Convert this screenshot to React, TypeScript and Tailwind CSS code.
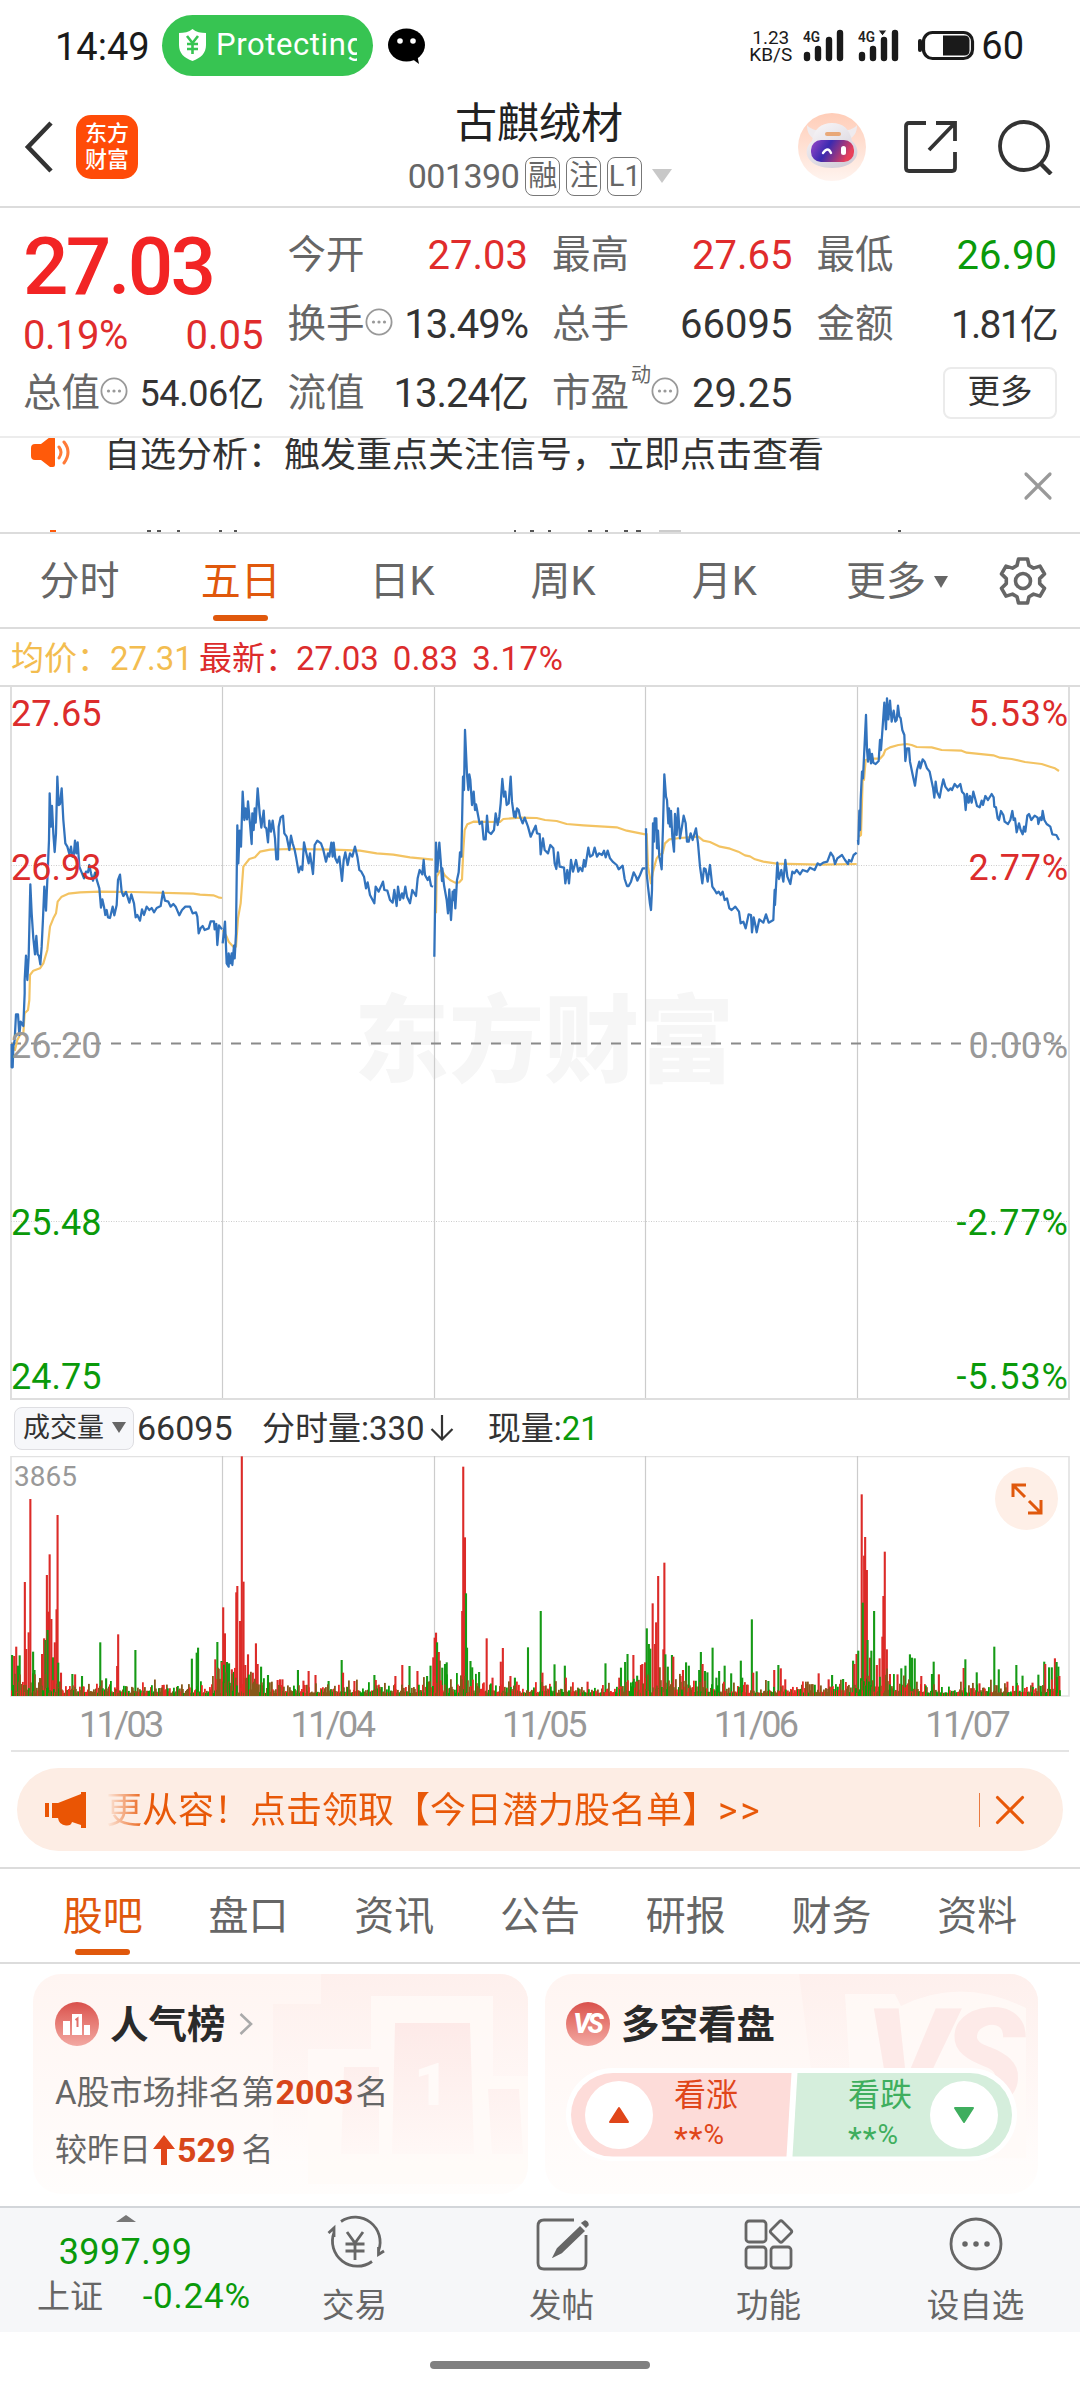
import { X } from 'lucide-react';

const DAYS = [
    {
        dx: 0,
        price: '35,1092 35,1162 38,1162 40,1100 44,1080 48,1003 54,1003 58,1065 62,1025 70,1038 74,940 74,900 78,827 82,900 86,830 91,613 95,700 100,775 105,823 109,768 113,823 117,828 121,853 125,800 129,715 133,620 138,692 142,600 147,480 149,340 153,440 156,378 160,460 164,516 168,460 172,290 176,375 180,372 185,325 190,420 196,490 202,500 208,522 213,500 217,530 221,528 225,482 229,520 233,487 238,560 244,575 252,595 258,575 264,577 268,555 273,580 279,602 285,578 291,602 298,625 303,683 307,658 312,680 316,705 320,690 324,712 330,714 338,680 343,706 350,675 354,600 360,584 365,635 370,648 378,636 388,668 394,643 402,670 407,712 412,705 420,722 426,688 432,705 440,680 448,690 455,684 462,697 470,684 482,678 489,635 495,662 505,665 512,680 520,672 527,680 538,706 546,690 556,680 570,680 578,700 588,697 592,710 596,760 602,744 608,738 614,750 626,745 632,724 642,724 644,748 649,732 652,795 657,736 666,748',
        avg: '35,1092 45,1110 52,1080 60,1065 70,1060 74,1000 84,990 88,960 90,885 100,872 120,865 130,850 142,810 150,740 160,715 168,700 173,665 185,650 205,641 240,637 300,635 400,636 580,641 600,644 640,646 655,652 666,654',
    },
    {
        dx: 0,
        price: '668,790 675,725 680,850 686,860 686,820 690,850 695,820 697,855 702,797 704,835 708,760 712,436 715,550 719,452 723,500 728,335 733,420 736,385 741,418 744,364 749,420 755,492 757,400 761,450 764,385 767,428 773,325 779,400 784,443 791,392 794,440 799,445 804,487 808,422 813,455 818,422 825,475 829,538 834,538 836,440 842,412 849,407 853,460 860,470 868,510 873,467 878,490 884,510 888,530 896,577 902,560 907,570 912,487 918,515 926,550 930,520 939,582 944,495 952,482 963,490 970,510 978,545 984,520 988,530 994,488 998,530 1001,488 1006,535 1012,548 1018,530 1026,603 1031,540 1036,517 1043,555 1050,520 1057,530 1065,500 1072,530 1078,570 1084,575 1092,590 1098,625 1103,607 1110,645 1123,670 1127,620 1136,635 1149,605 1153,630 1162,632 1170,660 1178,668 1183,630 1190,678 1194,620 1200,660 1206,640 1210,655 1216,620 1221,650 1230,670 1237,630 1248,648 1253,595 1259,570 1267,583 1271,540 1275,585 1283,600 1288,590 1293,617 1299,620',
        avg: '668,750 680,770 686,785 700,800 708,800 714,715 722,670 730,560 748,537 765,532 780,515 810,509 870,507 1000,509 1080,512 1130,520 1180,524 1230,532 1299,539',
    },
    {
        dx: 1260,
        price: '43,830 48,488 52,575 58,488 62,540 66,603 67,565 72,615 80,660 84,700 88,628 93,720 98,635 101,660 103,630 106,685 111,600 116,577 120,517 124,530 129,290 132,330 135,150 141,283 145,330 148,283 151,300 156,375 161,335 165,390 168,373 175,410 179,432 186,425 191,478 197,478 201,407 205,455 213,462 222,450 227,400 233,435 238,410 242,370 247,297 252,350 256,335 260,375 266,370 272,290 276,365 282,410 285,395 287,412 291,385 296,390 300,410 308,430 314,413 324,440 332,470 340,452 347,437 351,460 359,462 362,523 369,475 374,510 384,520 391,495 400,505 404,550 409,567 414,517 419,560 432,563 436,610 442,570 447,610 453,540 459,575 468,540 475,575 480,563 487,573 492,540 496,560 505,503 510,530 518,525 524,503 531,530 537,520 546,525 552,512 557,532 563,512 570,535 578,545 590,555 596,568 608,557 614,597 621,618 626,618 633,605 641,577 648,590 652,602 660,585 668,565 676,565',
        avg: '48,700 50,590 60,572 66,570 75,587 90,600 105,608 118,607 126,598 130,510 134,450 142,433 160,425 240,426 250,417 300,413 350,414 375,420 410,423 440,432 490,436 590,442 620,452 676,463',
    },
    {
        dx: 1260,
        price: '678,445 680,580 684,620 690,672 693,690 696,630 699,430 702,485 704,415 709,415 711,505 714,452 718,530 722,550 725,568 729,440 733,283 738,350 741,360 745,430 747,385 750,440 753,393 757,470 762,515 765,402 770,465 774,385 780,475 786,440 791,407 797,430 801,485 806,485 812,460 818,480 828,445 834,490 840,560 847,610 852,565 857,568 863,605 870,555 877,620 884,630 890,640 896,635 902,645 908,635 914,660 921,655 928,685 935,690 946,680 957,695 962,730 970,725 977,745 986,703 993,705 996,757 1001,712 1006,735 1010,757 1018,718 1030,728 1038,703 1046,728 1060,720 1064,630 1065,675 1072,548 1077,597 1084,570 1090,605 1096,540 1102,590 1111,612 1117,575 1123,580 1130,570 1140,583 1148,570 1162,575 1170,563 1184,570 1193,550 1200,555 1210,548 1222,545 1232,518 1240,530 1245,552 1252,535 1266,525 1275,540 1284,552 1287,540 1294,545 1301,525 1310,518',
        avg: '680,460 684,560 693,610 698,580 703,560 710,535 718,525 728,520 735,490 748,478 780,474 835,470 850,482 870,486 900,500 930,506 955,515 975,526 990,529 1005,538 1030,545 1070,551 1200,554 1310,552',
    },
    {
        dx: 2340,
        price: '234,480 235,492 238,392 240,450 242,360 246,275 249,295 253,210 258,105 261,210 264,245 268,208 273,250 276,222 280,248 287,252 296,243 300,180 303,210 308,140 313,68 318,148 321,55 325,118 330,62 335,125 341,92 346,125 350,120 354,77 358,110 362,115 367,150 373,165 376,243 381,205 387,205 390,245 397,280 405,317 411,270 418,245 421,265 428,238 434,245 441,265 449,275 453,295 459,323 463,353 467,305 471,335 479,353 484,325 490,298 496,320 505,332 512,325 516,330 524,312 532,322 541,312 546,335 553,343 557,390 561,342 566,368 570,348 575,368 580,335 586,358 591,378 599,382 605,362 609,375 616,348 624,360 635,342 641,352 643,380 648,382 653,415 657,420 663,393 670,405 674,425 684,432 691,420 697,393 701,420 705,415 710,457 717,430 722,450 728,463 732,440 736,455 742,407 747,402 754,420 764,407 773,413 775,432 781,412 785,420 788,393 793,420 800,432 811,440 817,463 829,465 837,480',
        avg: '236,470 243,465 248,300 252,300 257,240 270,236 300,236 310,225 316,210 330,202 355,195 380,192 395,195 410,201 455,202 485,210 545,212 560,218 640,226 660,233 695,237 735,246 785,252 810,260 825,265 837,273',
    },
];

// x, y, colour of the taller volume bars (y grows downwards, 948 is the base line)
const SPIKES =
    '35,825,g 41,828,r 47,800,r 52,857,g 57,826,g 72,606,r 76,807,r 83,757,r 88,357,r 96,815,g 100,870,g 122,822,r 128,775,r 132,780,g 136,585,r 140,695,r 144,523,r 138,750,g 149,717,r 154,832,g 159,787,r 164,688,r 167,405,r 169,848,g 177,878,r 210,882,g 218,883,r 238,888,g 291,787,g 308,895,g 340,858,r 343,763,r 393,810,g 472,915,r 557,836,g 571,818,g 575,803,g 625,838,r 631,786,g 648,682,r 653,760,r 643,843,g 659,846,g 665,850,g 673,868,r 686,637,r 689,618,r 697,723,r 702,229,r 707,605,r 712,855,r 720,823,r 734,878,r 743,790,r 748,852,r 758,860,g 778,885,g 806,900,r 813,898,r 820,898,r 865,870,g 881,902,r 896,873,r 916,885,r 954,903,g 992,840,g 996,878,r 1029,903,r 1087,885,g 1091,900,r 1148,888,r 1168,855,r 1189,858,g 1212,873,r 1240,888,g 1250,857,g 1258,832,r 1262,773,r 1266,758,r 1269,787,g 1274,816,r 1284,863,g 1292,852,g 1297,847,g 1342,693,r 1345,260,r 1350,472,r 1353,640,g 1356,803,g 1366,843,g 1371,862,g 1391,876,g 1413,775,r 1430,893,r 1454,845,r 1460,804,r 1482,888,r 1495,893,g 1533,802,g 1570,693,g 1575,878,r 1610,853,g 1640,857,g 1643,893,r 1706,905,r 1758,850,g 1798,893,r 1803,863,g 1815,846,g 1822,822,g 1839,825,r 1850,887,g 1861,855,r 1865,852,r 1873,847,r 1878,745,g 1884,792,g 1888,806,g 1895,670,r 1902,792,r 1905,727,r 1911,588,r 1926,808,r 1929,548,r 1932,823,g 1939,860,g 1951,825,g 1955,830,r 1976,888,r 1983,870,r 1992,847,g 2000,857,g 2030,870,g 2035,816,g 2040,852,r 2047,873,g 2054,877,g 2069,803,g 2080,893,g 2088,873,g 2104,857,g 2123,880,g 2151,842,g 2155,893,g 2183,718,g 2187,878,r 2197,874,g 2231,903,g 2248,870,r 2260,855,g 2267,865,r 2280,898,r 2344,912,r 2377,880,r 2406,898,r 2416,885,g 2448,897,g 2477,842,g 2481,852,r 2487,822,r 2492,812,g 2502,343,r 2509,527,r 2512,471,r 2505,668,g 2517,570,r 2519,780,g 2526,833,r 2530,812,g 2538,693,g 2546,855,r 2554,835,r 2562,770,r 2565,648,r 2569,515,r 2575,808,r 2584,882,r 2606,883,r 2617,865,g 2629,857,g 2642,823,g 2648,833,g 2656,835,g 2675,888,r 2706,882,g 2711,845,g 2726,883,r 2798,864,r 2803,838,g 2836,877,g 2844,910,r 2887,800,g 2900,868,g 2925,905,r 2951,855,g 2969,887,g 2998,908,r 3015,884,g 3032,845,g 3035,852,r 3046,862,g 3054,862,g 3063,835,r 3068,846,g 3073,860,g 3076,888,r'
        .split(' ')
        .map((s) => s.split(','))
        .map(([x, y, c]) => ({ x: Number(x) / 2.9037 - 11, h: (948 - Number(y)) / 3, red: c === 'r' }));

function smallBars() {
    const bars: { x: number; h: number; color: string }[] = [];
    const colors = ['#e82a25', '#0a9c0a', '#86581a', '#86581a'];
    let seed = 41;
    const rand = () => {
        seed = (seed * 1103515245 + 12345) % 2147483648;
        return seed / 2147483648;
    };
    for (let x = 0; x < 1049; x += 1) {
        const t = (x % 211.6) / 211.6;
        const swell = t < 0.28 ? 24 - t * 50 : t > 0.88 ? 9 + (t - 0.88) * 120 : 9;
        bars.push({ x, h: 3 + rand() * rand() * swell * 1.6, color: colors[Math.floor(rand() * 4)] });
    }
    return bars;
}

const SMALL_BARS = smallBars();

const PERIODS = ['分时', '五日', '日K', '周K', '月K'];
const SECTIONS = ['股吧', '盘口', '资讯', '公告', '研报', '财务', '资料'];

function Dots() {
    return (
        <svg width="28" height="28" viewBox="0 0 28 28" className="mb-[3px] shrink-0">
            <circle cx="14" cy="14" r="12.6" fill="none" stroke="#999" strokeWidth="1.8" />
            <circle cx="8.5" cy="14" r="1.6" fill="#999" />
            <circle cx="14" cy="14" r="1.6" fill="#999" />
            <circle cx="19.5" cy="14" r="1.6" fill="#999" />
        </svg>
    );
}

function Signal({ arrow }: { arrow?: boolean }) {
    return (
        <svg width="42" height="34" viewBox="0 0 42 34">
            <text x="0" y="13" fontSize="15" fontWeight="600" fill="#222" textLength="17" lengthAdjust="spacingAndGlyphs">4G</text>
            <g stroke="#1a1a1a" strokeWidth="6.4" strokeLinecap="round">
                <path d="M4 26v3M15 20v9M26 11v18M37 4v25" />
            </g>
            {arrow && <path d="M20 1h9l-4.500 6z" fill="#222" stroke="#fff" strokeWidth="1" />}
        </svg>
    );
}

function StatusBar() {
    return (
        <div className="flex h-[90px] items-center pl-[55px] pr-[56px] text-[#1a1a1a]">
            <span className="w-[107px] pt-[3px] text-[38px] leading-none">14:49</span>
            <div className="flex h-[61px] w-[211px] items-center rounded-full bg-[#37c452] pl-4">
                <svg width="29" height="32" viewBox="0 0 29 32">
                    <path d="M14.500 0C18 3 23 4 28 4v12c0 8-5 13-13.500 16C6 29 1 24 1 16V4c5 0 10-1 13.500-4z" fill="#fff" />
                    <path d="M9 7l5.500 7L20 7M14.500 14v11M9 15h11M9 20h11" stroke="#37c452" strokeWidth="2.600" fill="none" />
                </svg>
                <span className="ml-[9px] w-[141px] overflow-hidden text-[31px] tracking-[0.6px] leading-[40px] text-white">Protecting</span>
            </div>
            <svg className="ml-[14px] mt-[3px]" width="40" height="38" viewBox="0 0 40 38">
                <ellipse cx="19.500" cy="17" rx="18.500" ry="16.500" />
                <path d="M24 30l8 6-2-10z" />
                <circle cx="13" cy="13" r="2.800" fill="#fff" />
                <circle cx="26" cy="13" r="2.800" fill="#fff" />
            </svg>
            <div className="ml-auto flex items-center pt-[2px]">
                <div className="w-[55px] text-center text-[19px] leading-[17px]">
                    1.23
                    <br />
                    KB/S
                </div>
                <div className="w-[5px]" />
                <Signal />
                <div className="w-[13px]" />
                <Signal arrow />
                <svg className="ml-[17px]" width="58" height="32" viewBox="0 0 58 32">
                    <path d="M3 11v9" stroke="#1a1a1a" strokeWidth="4" strokeLinecap="round" />
                    <rect x="6.500" y="2.500" width="49" height="26" rx="9" fill="none" stroke="#1a1a1a" strokeWidth="3.200" />
                    <path d="M26 5.500h21.500q5 0 5 5v10q0 5-5 5H26z" fill="#1a1a1a" />
                </svg>
                <span className="ml-[6px] text-[38px] leading-none">60</span>
            </div>
        </div>
    );
}

function Robot() {
    return (
        <svg width="70" height="70" viewBox="0 0 70 70">
            <defs>
                <linearGradient id="halo" x1="0" y1="0" x2="0" y2="1">
                    <stop offset="0" stopColor="#ffcdb8" />
                    <stop offset="1" stopColor="#fff4ef" />
                </linearGradient>
                <linearGradient id="visor" x1="0" y1="0" x2="1" y2="0.3">
                    <stop offset="0" stopColor="#9a48c8" />
                    <stop offset="0.45" stopColor="#3a2ab0" />
                    <stop offset="1" stopColor="#e8405a" />
                </linearGradient>
                <linearGradient id="shell" x1="0" y1="0" x2="0.6" y2="1">
                    <stop offset="0" stopColor="#fbf9fa" />
                    <stop offset="1" stopColor="#d4d0da" />
                </linearGradient>
            </defs>
            <circle cx="35" cy="35" r="34" fill="url(#halo)" />
            <path d="M10 13c0 8 3 11 7 14l8-9c-6 1-12-1-15-5zM60 13c0 8-3 11-7 14l-8-9c6 1 12-1 15-5z" fill="#efebee" />
            <path d="M35 11c11 0 18 6 20 18 6 5 7 13 3 18-4 6-13 9-23 9s-19-3-23-9c-4-5-3-13 3-18 2-12 9-18 20-18z" fill="url(#shell)" />
            <rect x="28" y="20" width="16" height="4" rx="2" fill="#e8a878" />
            <rect x="14" y="28" width="43" height="22" rx="10" fill="url(#visor)" />
            <path d="M26 41q5-7 8 0" stroke="#fff" strokeWidth="2.400" fill="none" strokeLinecap="round" />
            <rect x="44" y="34" width="5" height="9" rx="2.500" fill="#fff" />
        </svg>
    );
}

function Header() {
    return (
        <div className="flex h-[118px] items-center justify-between border-b-2 border-[#dcdcdc] pl-6 pr-[26px]">
            <div className="-mt-[3px] flex w-[384px] items-center gap-[22px]">
                <svg width="30" height="52" viewBox="0 0 30 52">
                    <path d="M27 2L4 26l23 24" fill="none" stroke="#333" strokeWidth="4.600" />
                </svg>
                <div className="grid h-[64px] w-[62px] grid-cols-2 content-center justify-center rounded-[15px] bg-[#ff4b08] px-[9px] text-[22px] font-medium leading-[26px] text-white">
                    <span>东</span>
                    <span>方</span>
                    <span>财</span>
                    <span>富</span>
                </div>
            </div>
            <div className="flex flex-col items-center">
                <h1 className="text-[42px] leading-[50px] text-[#222]">古麒绒材</h1>
                <div className="ml-[2px] mt-[6px] flex h-[42px] items-center gap-[6px] text-[#666]">
                    <span className="text-[34px] leading-none tracking-[-0.5px]">001390</span>
                    {['融', '注', 'L1'].map((tag) => (
                        <span key={tag} className="flex h-[39px] w-[35px] items-center justify-center rounded-[8px] border border-[#777] text-[29px] leading-none">
                            {tag}
                        </span>
                    ))}
                    <svg className="ml-1" width="20" height="14" viewBox="0 0 20 14">
                        <path d="M0 0h20L10 14z" fill="#c8c8c8" />
                    </svg>
                </div>
            </div>
            <div className="-mt-[3px] flex w-[384px] items-center justify-end">
                <Robot />
                <svg className="ml-[36px]" width="56" height="56" viewBox="0 0 56 56" fill="none" stroke="#333" strokeWidth="3.800">
                    <path d="M23 4H6q-3 0-3 3v42q0 3 3 3h43q3 0 3-3V33M33 4h19v18M51 5L26 31" />
                </svg>
                <svg className="ml-[39px]" width="56" height="56" viewBox="0 0 56 56" fill="none" stroke="#333" strokeWidth="3.800">
                    <circle cx="26" cy="27" r="24" />
                    <path d="M42 44l11 11" strokeWidth="4.400" />
                </svg>
            </div>
        </div>
    );
}

type StatProps = { label: string; value: string; color?: string; info?: boolean; sup?: string; size?: string };

function Stat({ label, value, color = 'text-[#333]', info, sup, size = 'text-[40px]' }: StatProps) {
    return (
        <div className="flex h-[69px] items-center whitespace-nowrap">
            <span className="pt-[2px] text-[38.500px] leading-none text-[#666]">{label}</span>
            {sup && <span className="mb-9 ml-[2px] text-[20px] leading-none text-[#666]">{sup}</span>}
            {info && <Dots />}
            <span className={`ml-auto pt-[3px] leading-none ${size} ${color}`}>{value}</span>
        </div>
    );
}

function Quote() {
    return (
        <div className="grid h-[230px] grid-cols-4 gap-x-6 border-b-2 border-[#ececec] px-[23px] pt-[12px]">
            <div>
                <div className="flex h-[90px] items-center pt-[4px] text-[80px] font-medium leading-none tracking-[-2.800px] text-[#f22424]">27.03</div>
                <div className="flex h-[48px] items-center justify-between pt-[4px] text-[40px] leading-none text-[#e02c2c]">
                    <span className="tracking-[-0.500px]">0.19%</span>
                    <span>0.05</span>
                </div>
                <Stat label="总值" value="54.06亿" info size="text-[36px] tracking-[-0.400px]" />
            </div>
            <div>
                <Stat label="今开" value="27.03" color="text-[#e02c2c]" />
                <Stat label="换手" value="13.49%" info size="text-[40px] tracking-[-1px]" />
                <Stat label="流值" value="13.24亿" size="text-[40px] tracking-[-1px]" />
            </div>
            <div>
                <Stat label="最高" value="27.65" color="text-[#e02c2c]" />
                <Stat label="总手" value="66095" />
                <Stat label="市盈" value="29.25" sup="动" info />
            </div>
            <div>
                <Stat label="最低" value="26.90" color="text-[#0a9a0a]" />
                <Stat label="金额" value="1.81亿" size="text-[39px] tracking-[-1.800px]" />
                <div className="flex h-[69px] items-center justify-end">
                    <span className="flex h-[52px] w-[114px] items-center justify-center rounded-[8px] border-2 border-[#ebebeb] text-[32.500px] leading-none text-[#333]">更多</span>
                </div>
            </div>
        </div>
    );
}

function Notice() {
    return (
        <div className="relative flex h-[96px] items-start overflow-hidden border-b-2 border-[#dcdcdc] pl-[31px]">
            <svg className="-mt-[1px]" width="42" height="32" viewBox="0 0 42 32">
                <path d="M4 7h6L19 0h3q2 0 2 2v26q0 2-2 2h-3l-9-7H4q-4 0-4-4v-8q0-4 4-4z" fill="#ff5a0a" />
                <path d="M28 10q4 5 0 11M33 5q8 10 0 21" stroke="#ff7a38" strokeWidth="3" fill="none" strokeLinecap="round" />
            </svg>
            <span className="-mt-[4px] ml-[31px] whitespace-nowrap text-[36px] leading-[42px] text-[#333]">自选分析：触发重点关注信号，立即点击查看</span>
            <X className="ml-auto mr-[18px] mt-[24px] text-[#999]" size={48} strokeWidth={1.6} />
            <svg className="absolute bottom-0 left-0" width="1080" height="2" viewBox="0 0 1080 2">
                <path d="M50 1h6" stroke="#ff5a0a" strokeWidth="2" />
                <path d="M147 1h4M157 1h4M177 1h3M219 1h3M234 1h3M514 1h2M530 1h4M548 1h3M588 1h4M605 1h3M624 1h4M636 1h5M898 1h3" stroke="#555" strokeWidth="2" />
                <path d="M659 1h22" stroke="#ccc" strokeWidth="2" />
            </svg>
        </div>
    );
}

function PeriodTabs() {
    return (
        <div className="flex h-[95px] items-center border-b-2 border-[#dcdcdc] text-[40px] leading-none text-[#666]">
            {PERIODS.map((p, i) => (
                <div key={p} className={`relative flex h-full w-[161.200px] items-center justify-center pr-[2px] pt-[3px] ${i === 1 ? 'text-[#e0580c]' : ''}`}>
                    {p}
                    {i === 1 && <span className="absolute bottom-[6px] h-[6px] w-[55px] rounded-full bg-[#e0580c]" />}
                </div>
            ))}
            <div className="ml-[40px] flex items-center gap-[8px] pt-[3px]">
                更多
                <svg width="14" height="12" viewBox="0 0 14 12">
                    <path d="M0 0h14L7 12z" fill="#666" />
                </svg>
            </div>
            <svg className="ml-[50px]" width="50" height="50" viewBox="0 0 50 50" fill="none" stroke="#666" strokeWidth="3.600" strokeLinejoin="round">
                <path d="M20.500 3h9l1.500 6.500 4.500 2.600 6.500-2 4.500 7.800-4.800 4.700v5l4.800 4.700-4.500 7.800-6.500-2-4.500 2.600-1.500 6.300h-9L19 40.700l-4.500-2.600-6.500 2-4.500-7.800 4.800-4.700v-5l-4.800-4.700 4.500-7.800 6.500 2L19 9.500z" />
                <circle cx="25" cy="25" r="7.500" />
            </svg>
        </div>
    );
}

function PriceChart() {
    return (
        <div className="relative mx-[10px] h-[713px]">
            <span className="absolute left-[344px] top-[301px] text-[95px] font-black leading-[110px] text-[#f6f6f6]">东方财富</span>
            <svg className="absolute inset-0" width="1060" height="713" viewBox="10 687 1060 713">
                <path d="M222.500 687v712M434.500 687v712M645.500 687v712M857.500 687v712" stroke="#ccc" strokeWidth="1.200" />
                <path d="M11 687v712h1058V687" fill="none" stroke="#dedede" strokeWidth="2" />
                <path d="M11 865.500h1058M11 1221.500h1058" stroke="#ccc" strokeWidth="1" strokeDasharray="1 1.500" />
                <path d="M11 1043.500h1050" stroke="#8a8a8a" strokeWidth="2" strokeDasharray="10 10" />
                {DAYS.map((d, i) => (
                    <g key={i} transform={`translate(${d.dx / 3} 680) scale(0.33333)`} fill="none" strokeLinejoin="round">
                        <polyline points={d.avg} stroke="#f3c362" strokeWidth="6.5" />
                        <polyline points={d.price} stroke="#3273bd" strokeWidth="6.8" />
                    </g>
                ))}
            </svg>
            <div className="absolute inset-0 text-[36px] leading-[36px] text-[#dc2c2c]">
                <span className="absolute left-[1px] top-[9px]">27.65</span>
                <span className="absolute left-[1px] top-[163px]">26.93</span>
                <span className="absolute left-[1px] top-[341px] text-[#999]">26.20</span>
                <span className="absolute left-[1px] top-[518px] text-[#0a9a0a]">25.48</span>
                <span className="absolute left-[1px] top-[672px] text-[#0a9a0a]">24.75</span>
                <span className="absolute right-[1px] top-[9px] tracking-[0.800px]">5.53%</span>
                <span className="absolute right-[1px] top-[163px] tracking-[0.800px]">2.77%</span>
                <span className="absolute right-[1px] top-[341px] tracking-[0.800px] text-[#999]">0.00%</span>
                <span className="absolute right-[1px] top-[518px] tracking-[1px] text-[#0a9a0a]">-2.77%</span>
                <span className="absolute right-[1px] top-[672px] tracking-[1px] text-[#0a9a0a]">-5.53%</span>
            </div>
        </div>
    );
}

function VolumeChart() {
    return (
        <>
            <div className="flex h-[56px] items-center pl-[14px] text-[34px] leading-none text-[#333]">
                <div className="flex h-[43px] w-[120px] items-center justify-between rounded-[8px] border border-[#dedee2] bg-[#f6f7fa] pl-[8px] pr-[7px] text-[27px]">
                    成交量
                    <svg width="14" height="12" viewBox="0 0 14 12">
                        <path d="M0 0h14L7 11z" fill="#666" />
                    </svg>
                </div>
                <span className="ml-[3px] w-[125px]">66095</span>
                <span className="text-[33px]">分时量:330</span>
                <svg className="ml-[5px] mr-[34px]" width="24" height="26" viewBox="0 0 24 26" fill="none" stroke="#333" strokeWidth="2.200">
                    <path d="M12 0v24M1.500 14L12 24.500 22.500 14" />
                </svg>
                <span className="text-[33px]">
                    现量:<span className="text-[#0a9a0a]">21</span>
                </span>
            </div>
            <div className="relative mx-[10px] h-[241px]">
                <svg width="1060" height="241" viewBox="-1 0 1060 241">
                    <path d="M0 240V.500h1058V240z" fill="none" stroke="#e2e2e2" strokeWidth="1.600" />
                    <path d="M211.500 0v240M423.500 0v240M634.500 0v240M846.500 0v240" stroke="#ccc" strokeWidth="1.200" />
                    {SPIKES.map((s, i) => (
                        <rect key={i} x={s.x - 1} y={240 - s.h} width="2.1" height={s.h} fill={s.red ? '#dc2b28' : '#169a16'} />
                    ))}
                    {SMALL_BARS.map((b) => (
                        <rect key={b.x} x={b.x} y={240 - b.h} width="1.8" height={b.h} fill={b.color} />
                    ))}
                </svg>
                <span className="absolute left-[4px] top-[7px] text-[28px] leading-[28px] text-[#999]">3865</span>
                <div className="absolute right-[12px] top-[11px] flex h-[63px] w-[63px] items-center justify-center rounded-full bg-[#feefe7]">
                    <svg width="32" height="32" viewBox="0 0 32 32" fill="none" stroke="#e0580c" strokeWidth="3">
                        <path d="M2 14V2h13M2 2l12 12M18 18l12 12M30 17v13H17" />
                    </svg>
                </div>
            </div>
            <div className="mx-[11px] flex h-[55px] border-b-2 border-[#e4e4e4] pt-[10px] text-[36px] leading-[36px] tracking-[-2.600px] text-[#999]">
                {['11/03', '11/04', '11/05', '11/06', '11/07'].map((d) => (
                    <span key={d} className="w-[211.600px] pl-[7px] text-center">
                        {d}
                    </span>
                ))}
            </div>
        </>
    );
}

function Banner() {
    return (
        <div className="mx-[17px] mt-4 flex h-[83px] items-center rounded-full bg-[#fdede4] pl-[27px] pr-[28px] text-[#e85808]">
            <svg width="44" height="38" viewBox="0 0 44 38" fill="#ea5504">
                <path d="M1 12h4v14H1zM8 12h6L37 3V1h5v36h-5v-3l-9-3q-1 4-6 3.500-7-.500-8-7.500H8z" />
            </svg>
            <div className="ml-[18px] mt-[2px] whitespace-nowrap bg-[linear-gradient(90deg,#fdede4_0,#e85808_40px)] bg-clip-text text-[36px] leading-[44px] text-transparent">
                更从容！点击领取【今日潜力股名单】<span className="text-[37px] tracking-[3px]">&gt;&gt;</span>
            </div>
            <span className="ml-auto h-[34px] w-[1.500px] bg-[#ea7a40]" />
            <X className="ml-[5px]" size={50} strokeWidth={1.500} />
        </div>
    );
}

function SectionTabs() {
    return (
        <div className="mt-[16px] flex h-[97px] items-center border-y-2 border-[#dcdcdc] px-[30px] text-[40px] leading-none text-[#666]">
            {SECTIONS.map((s, i) => (
                <div key={s} className={`relative flex h-full flex-1 items-center justify-center pt-[3px] ${i === 0 ? 'text-[#e0580c]' : ''}`}>
                    {s}
                    {i === 0 && <span className="absolute bottom-[7px] h-[6px] w-[55px] rounded-full bg-[#e0580c]" />}
                </div>
            ))}
        </div>
    );
}

function Cards() {
    return (
        <div className="flex h-[242px] gap-[17px] pl-[33px] pt-[10px]">
            <div className="relative h-[220px] w-[495px] overflow-hidden rounded-[28px] bg-gradient-to-b from-[#fff5f2] to-[#fffdfc] pl-[22px]">
                <svg className="absolute inset-0" width="495" height="220" viewBox="0 0 495 220">
                    <defs>
                        <linearGradient id="podium" x1="0" y1="0" x2="0" y2="1">
                            <stop offset="0" stopColor="#fdeae8" />
                            <stop offset="1" stopColor="#fff8f6" />
                        </linearGradient>
                        <linearGradient id="back" x1="0" y1="0" x2="0" y2="1">
                            <stop offset="0" stopColor="#fef0ed" />
                            <stop offset="1" stopColor="#fffcfb" />
                        </linearGradient>
                    </defs>
                    <path d="M240 30h48V0h207v190H240z" fill="url(#back)" />
                    <path d="M275 75h63V22h122v80h35v108H275z" fill="#fffaf8" opacity=".8" />
                    <path d="M311 93h35v87h-38zM362 49h75l4 131h-82zM455 115h31l4 65h-31z" fill="url(#podium)" />
                </svg>
                <span className="absolute left-[381px] top-[81px] text-[60px] font-black leading-none text-[#fffaf8]">1</span>
                <div className="relative mt-[28px] flex h-[44px] items-center">
                    <div className="flex h-[44px] w-[44px] items-center justify-center rounded-full bg-gradient-to-b from-[#d9504c] to-[#f2a8a2]">
                        <svg width="28" height="26" viewBox="0 0 28 26">
                            <path d="M0 10h7v14H0zM9 3h10v21H9zM21 14h6v10h-6z" fill="#fff" />
                            <path d="M12.500 9l2-1.500V16" stroke="#e0706a" strokeWidth="2" fill="none" />
                        </svg>
                    </div>
                    <span className="ml-[11px] pt-[3px] text-[38.500px] font-bold leading-none text-[#2a2a2a]">人气榜</span>
                    <svg className="ml-[13px]" width="14" height="22" viewBox="0 0 14 22" fill="none" stroke="#aaa" strokeWidth="2.600">
                        <path d="M1.500 1l10.500 10L1.500 21" />
                    </svg>
                </div>
                <div className="relative mt-[23px] flex h-[46px] items-center text-[33px] leading-none text-[#666]">
                    A股市场排名第<b className="ml-[1px] mr-[2px] text-[34px] font-bold">
                        <span className="text-[#d8461a]">2003</span>
                    </b>
                    名
                </div>
                <div className="relative mt-[12px] flex h-[46px] items-center text-[32px] leading-none text-[#666]">
                    较昨日
                    <svg className="mx-[1px]" width="24" height="30" viewBox="0 0 24 30">
                        <path d="M12 0l11 14h-8v16H9V14H1z" fill="#e0461a" />
                    </svg>
                    <b className="mr-[6px] text-[34px] font-bold text-[#d8461a]">529</b>名
                </div>
            </div>
            <div className="relative h-[220px] w-[493px] overflow-hidden rounded-[28px] bg-gradient-to-b from-[#fff5f2] to-[#fffdfc] pl-[21px]">
                <svg className="absolute inset-0" width="493" height="220" viewBox="0 0 493 220">
                    <path d="M254 0h239v190H278z" fill="url(#back)" />
                    <path d="M300 20h50l6 12q60-30 125 2v150H310z" fill="#fffaf8" opacity=".8" />
                </svg>
                <span className="absolute left-[320px] top-[18px] text-[136px] font-black italic leading-[136px] tracking-[-10px] text-[#fdeae8]">VS</span>
                <div className="relative mt-[28px] flex h-[44px] items-center">
                    <div className="flex h-[44px] w-[44px] items-center justify-center rounded-full bg-gradient-to-b from-[#d9504c] to-[#f2a8a2] pr-[2px] text-[27px] font-extrabold italic leading-none tracking-[-3px] text-white">VS</div>
                    <span className="ml-[11px] pt-[3px] text-[38.500px] font-bold leading-none text-[#2a2a2a]">多空看盘</span>
                </div>
                <div className="relative mt-[22px] flex h-[93px] w-[451px] items-center rounded-full bg-white p-[5px]">
                    <div className="flex h-[84px] flex-1 items-center rounded-l-full bg-[#fddcd9] pl-[14px] [clip-path:polygon(0_0,100%_0,calc(100%-5px)_100%,0_100%)]">
                        <span className="flex h-[68px] w-[68px] items-center justify-center rounded-full bg-white">
                            <svg width="22" height="18" viewBox="0 0 22 18">
                                <path d="M11 2l9 14H2z" fill="#e0461a" stroke="#e0461a" strokeWidth="2" strokeLinejoin="round" />
                            </svg>
                        </span>
                        <div className="ml-[21px] flex flex-col text-[32px] leading-[40px] text-[#e0461a]">
                            <span>看涨</span>
                            <span className="flex h-[40px] items-center text-[28px] leading-[40px]">
                                <span className="pt-[7px] text-[32px] tracking-[1px]">**</span>%
                            </span>
                        </div>
                    </div>
                    <div className="flex h-[84px] flex-1 items-center justify-end rounded-r-full bg-[#d5eedc] pr-[14px] [clip-path:polygon(6px_0,100%_0,100%_100%,1px_100%)]">
                        <div className="mr-[18px] flex flex-col text-[32px] leading-[40px] text-[#3fae5e]">
                            <span>看跌</span>
                            <span className="flex h-[40px] items-center text-[28px] leading-[40px]">
                                <span className="pt-[7px] text-[32px] tracking-[1px]">**</span>%
                            </span>
                        </div>
                        <span className="flex h-[68px] w-[68px] items-center justify-center rounded-full bg-white">
                            <svg width="22" height="18" viewBox="0 0 22 18">
                                <path d="M11 16L2 2h18z" fill="#3fae5e" stroke="#3fae5e" strokeWidth="2" strokeLinejoin="round" />
                            </svg>
                        </span>
                    </div>
                </div>
            </div>
        </div>
    );
}

const NAV = [
    {
        label: '交易',
        icon: (
            <>
                <path d="M16 7.500A25 25 0 0 1 53.500 37M47 47.500A25 25 0 0 1 9 18.500M3.500 19l5.500-5v9M59 37l-5.500 3.500V33" />
                <path d="M22 18l8 11 8-11M30 29v17M20.500 30h19M20.500 37h19" />
            </>
        ),
    },
    {
        label: '发帖',
        icon: (
            <>
                <path d="M42 6H12q-6 0-6 6v37q0 6 6 6h36q6 0 6-6V21" />
                <path d="M48 14L26 35l-3 6 6-3L51 17z" fill="#666" />
                <path d="M50 9l4 4 2-2q0-3-3-4z" fill="#666" strokeWidth="1.500" />
            </>
        ),
    },
    {
        label: '功能',
        icon: (
            <>
                <rect x="7" y="7" width="20" height="21" rx="3" />
                <rect x="7" y="33" width="20" height="21" rx="3" />
                <rect x="32" y="33" width="20" height="21" rx="3" />
                <path d="M40.500 7.500q1.500-1.500 3 0l8.500 8.500q1.500 1.500 0 3l-8.500 8.500q-1.500 1.500-3 0L32 19q-1.500-1.500 0-3z" />
            </>
        ),
    },
    {
        label: '设自选',
        icon: (
            <>
                <circle cx="30" cy="30" r="25" />
                <path d="M19 30h.010M30 30h.010M41 30h.010" strokeWidth="5.500" strokeLinecap="round" />
            </>
        ),
    },
];

function BottomNav() {
    return (
        <div className="flex h-[126px] border-t-2 border-[#d3d6da] bg-[#f6f7f9]">
            <div className="flex w-[251px] flex-col items-center">
                <svg className="mt-[7px]" width="20" height="7" viewBox="0 0 20 7">
                    <path d="M10 0l10 7H0z" fill="#777" />
                </svg>
                <span className="mt-[11px] text-[36px] leading-[38px] tracking-[0.400px] text-[#0a9a0a]">3997.99</span>
                <div className="mt-[6px] flex w-full items-center justify-between pl-[37px] text-[33px] leading-[40px] text-[#666]">
                    <span>上证</span>
                    <span className="text-[35px] tracking-[0.800px] text-[#0a9a0a]">-0.24%</span>
                </div>
            </div>
            {NAV.map((n) => (
                <div key={n.label} className="flex w-[207px] flex-col items-center pt-[6px] text-[32.500px] leading-[40px] text-[#666]">
                    <svg width="60" height="60" viewBox="0 0 60 60" fill="none" stroke="#666" strokeWidth="2.800">
                        {n.icon}
                    </svg>
                    <span className="mt-[12px]">{n.label}</span>
                </div>
            ))}
        </div>
    );
}

export default function App() {
    return (
        <div lang="zh-CN" className="h-[2400px] w-[1080px] overflow-hidden bg-white font-['Roboto','Noto_Sans_CJK_SC',sans-serif]">
            <StatusBar />
            <Header />
            <Quote />
            <Notice />
            <PeriodTabs />
            <div className="flex h-[58px] items-center border-b-2 border-[#dcdcdc] pl-[11px] pt-[3px] text-[33px] leading-none text-[#dc2c2c]">
                <span className="text-[#f3bd50]">均价：27.31</span>
                <span className="ml-[6px]">
                    最新：<span className="-ml-[2px]">27.03</span>
                </span>
                <span className="ml-[14px] tracking-[0.300px]">0.83</span>
                <span className="ml-[14px] tracking-[0.500px]">3.17%</span>
            </div>
            <PriceChart />
            <VolumeChart />
            <Banner />
            <SectionTabs />
            <Cards />
            <BottomNav />
            <div className="mx-auto mt-[29px] h-[8px] w-[220px] rounded-full bg-[#808080]" />
        </div>
    );
}
